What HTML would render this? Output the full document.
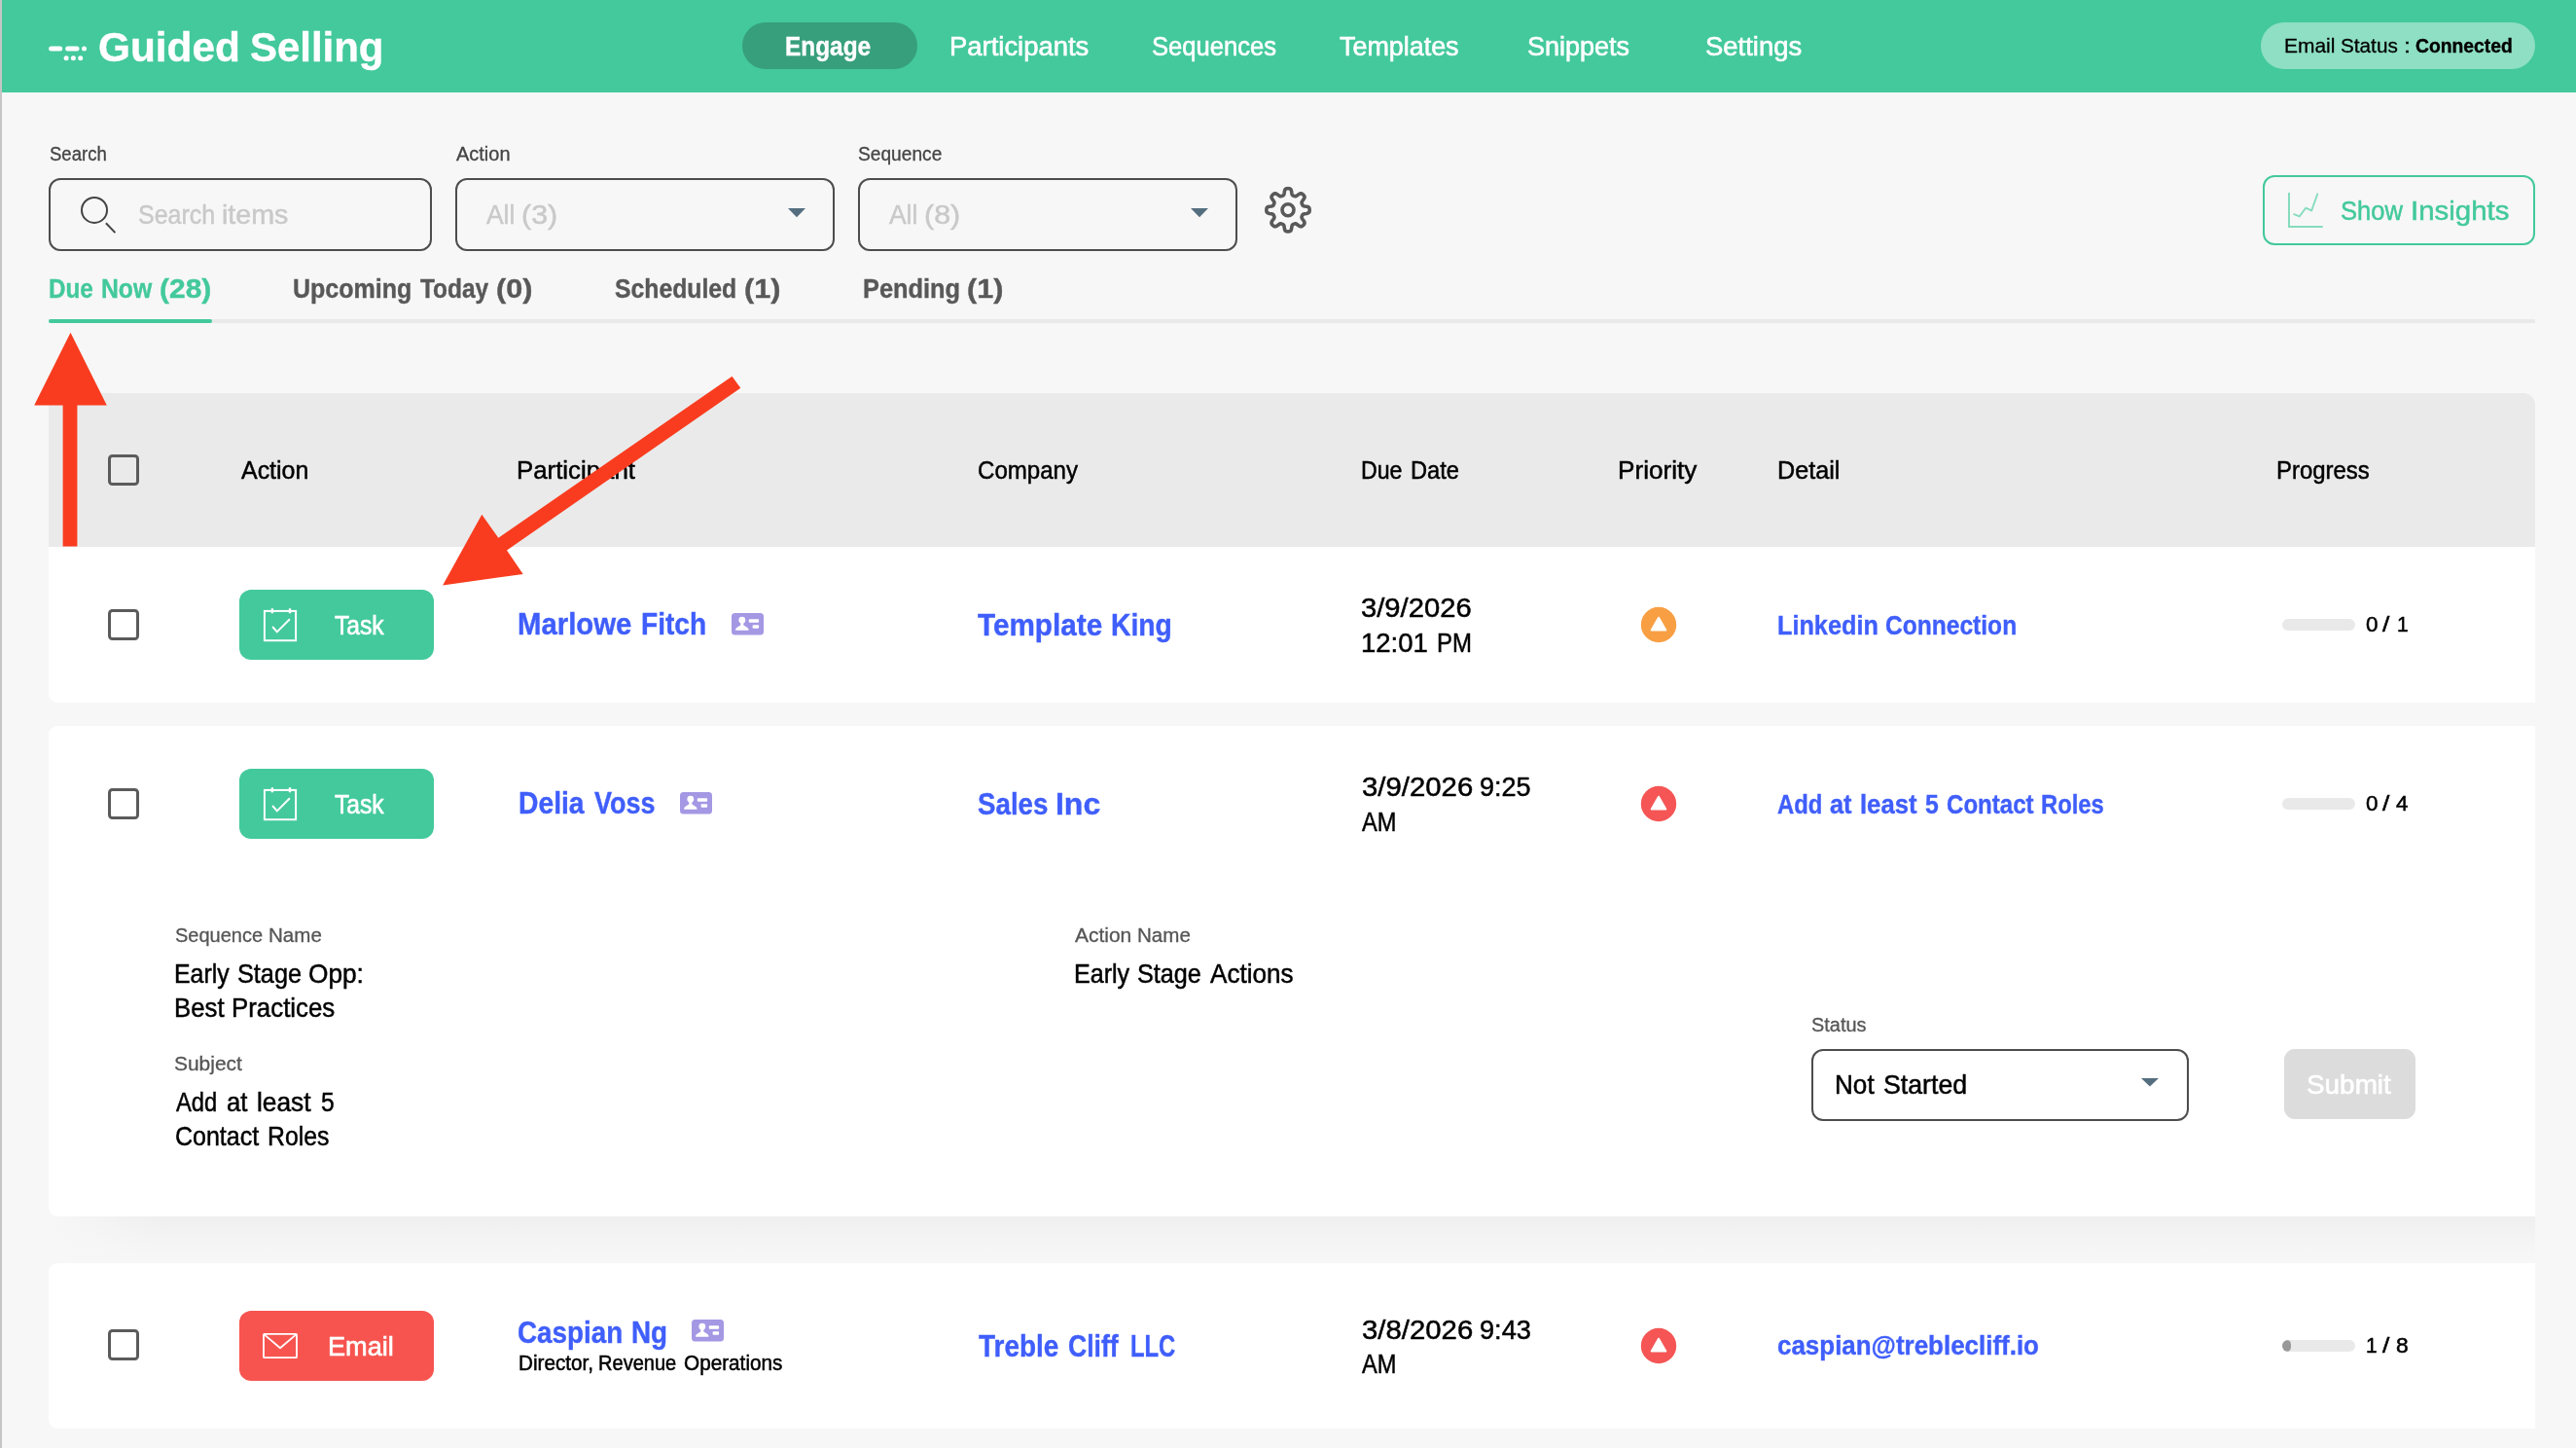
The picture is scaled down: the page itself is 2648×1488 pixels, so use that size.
<!DOCTYPE html>
<html lang="en"><head><meta charset="utf-8"><title>Guided Selling</title><style>
html,body{margin:0;padding:0}
body{width:2648px;height:1488px;position:relative;overflow:hidden;background:#f7f7f7;font-family:"Liberation Sans",sans-serif}
.a{position:absolute;display:block}
.t{position:absolute;white-space:nowrap;transform-origin:0 0;display:block;-webkit-text-stroke:0.25px currentColor}
.box{position:absolute;box-sizing:border-box;border:2px solid #4d4d4d;border-radius:12px}
.cb{position:absolute;box-sizing:border-box;width:32px;height:32px;border:3.8px solid #5b5b5b;border-radius:4.5px}
.btn{position:absolute;width:200px;height:72px;border-radius:12px}
.pb{position:absolute;width:75px;height:12px;border-radius:6px;background:#e9e9e9;overflow:hidden}
.card{position:absolute;left:50px;width:2556px;background:#fff}
</style></head><body>
<div class="a" style="left:0;top:0;width:2648px;height:94.5px;background:#43c99b"></div>
<div class="a" style="left:0;top:0;width:2px;height:1488px;background:#c6c6c6"></div>
<svg class="a" style="left:44px;top:40px" width="50" height="30" viewBox="44 40 50 30" stroke="#fff" stroke-width="5" stroke-linecap="round" fill="#fff">
<path d="M52.6 50 H61.7 M69.7 50 H79"/><circle cx="86.5" cy="50" r="2.5" stroke="none"/>
<circle cx="68.1" cy="59.8" r="2.5" stroke="none"/><circle cx="75.4" cy="59.8" r="2.5" stroke="none"/><circle cx="82.7" cy="59.8" r="2.5" stroke="none"/>
</svg>
<div class="a" style="left:763px;top:23px;width:180px;height:48px;border-radius:24px;background:#379f7b"></div>
<div class="a" style="left:2324px;top:23px;width:282px;height:48px;border-radius:24px;background:#8edfc3"></div>

<div class="box" style="left:50px;top:183px;width:394px;height:75px"></div>
<svg class="a" style="left:78px;top:198px" width="48" height="48" viewBox="78 198 48 48" fill="none" stroke="#444" stroke-width="2"><circle cx="97" cy="215.9" r="13"/><path d="M108.9 229.3 L118.4 239.1"/></svg>
<div class="box" style="left:468px;top:183px;width:390px;height:75px"></div>
<div class="box" style="left:882px;top:183px;width:390px;height:75px"></div>
<svg class="a" style="left:808px;top:212px" width="22" height="13" viewBox="0 0 22 13"><path d="M2 2 H20 L11 11.3 Z" fill="#546e7f"/></svg>
<svg class="a" style="left:1222px;top:212px" width="22" height="13" viewBox="0 0 22 13"><path d="M2 2 H20 L11 11.3 Z" fill="#546e7f"/></svg>
<svg class="a" style="left:1294px;top:186px" width="60" height="60" viewBox="1294 186 60 60" fill="none" stroke="#595959" stroke-width="3.6" stroke-linejoin="round"><path d="M1324.00,193.65 L1324.70,193.68 L1325.39,193.77 L1326.06,193.97 L1326.70,194.41 L1327.25,195.30 L1327.62,196.82 L1327.86,198.53 L1328.12,199.75 L1328.47,200.42 L1328.88,200.79 L1329.31,201.04 L1329.76,201.25 L1330.22,201.43 L1330.68,201.60 L1331.17,201.74 L1331.72,201.76 L1332.43,201.54 L1333.48,200.86 L1334.86,199.82 L1336.20,199.01 L1337.22,198.76 L1337.98,198.91 L1338.60,199.24 L1339.15,199.66 L1339.66,200.14 L1340.14,200.65 L1340.56,201.20 L1340.89,201.82 L1341.04,202.58 L1340.79,203.60 L1339.98,204.94 L1338.94,206.32 L1338.26,207.37 L1338.04,208.08 L1338.06,208.63 L1338.20,209.12 L1338.37,209.58 L1338.55,210.04 L1338.76,210.49 L1339.01,210.92 L1339.38,211.33 L1340.05,211.68 L1341.27,211.94 L1342.98,212.18 L1344.50,212.55 L1345.39,213.10 L1345.83,213.74 L1346.03,214.41 L1346.12,215.10 L1346.15,215.80 L1346.12,216.50 L1346.03,217.19 L1345.83,217.86 L1345.39,218.50 L1344.50,219.05 L1342.98,219.42 L1341.27,219.66 L1340.05,219.92 L1339.38,220.27 L1339.01,220.68 L1338.76,221.11 L1338.55,221.56 L1338.37,222.02 L1338.20,222.48 L1338.06,222.97 L1338.04,223.52 L1338.26,224.23 L1338.94,225.28 L1339.98,226.66 L1340.79,228.00 L1341.04,229.02 L1340.89,229.78 L1340.56,230.40 L1340.14,230.95 L1339.66,231.46 L1339.15,231.94 L1338.60,232.36 L1337.98,232.69 L1337.22,232.84 L1336.20,232.59 L1334.86,231.78 L1333.48,230.74 L1332.43,230.06 L1331.72,229.84 L1331.17,229.86 L1330.68,230.00 L1330.22,230.17 L1329.76,230.35 L1329.31,230.56 L1328.88,230.81 L1328.47,231.18 L1328.12,231.85 L1327.86,233.07 L1327.62,234.78 L1327.25,236.30 L1326.70,237.19 L1326.06,237.63 L1325.39,237.83 L1324.70,237.92 L1324.00,237.95 L1323.30,237.92 L1322.61,237.83 L1321.94,237.63 L1321.30,237.19 L1320.75,236.30 L1320.38,234.78 L1320.14,233.07 L1319.88,231.85 L1319.53,231.18 L1319.12,230.81 L1318.69,230.56 L1318.24,230.35 L1317.78,230.17 L1317.32,230.00 L1316.83,229.86 L1316.28,229.84 L1315.57,230.06 L1314.52,230.74 L1313.14,231.78 L1311.80,232.59 L1310.78,232.84 L1310.02,232.69 L1309.40,232.36 L1308.85,231.94 L1308.34,231.46 L1307.86,230.95 L1307.44,230.40 L1307.11,229.78 L1306.96,229.02 L1307.21,228.00 L1308.02,226.66 L1309.06,225.28 L1309.74,224.23 L1309.96,223.52 L1309.94,222.97 L1309.80,222.48 L1309.63,222.02 L1309.45,221.56 L1309.24,221.11 L1308.99,220.68 L1308.62,220.27 L1307.95,219.92 L1306.73,219.66 L1305.02,219.42 L1303.50,219.05 L1302.61,218.50 L1302.17,217.86 L1301.97,217.19 L1301.88,216.50 L1301.85,215.80 L1301.88,215.10 L1301.97,214.41 L1302.17,213.74 L1302.61,213.10 L1303.50,212.55 L1305.02,212.18 L1306.73,211.94 L1307.95,211.68 L1308.62,211.33 L1308.99,210.92 L1309.24,210.49 L1309.45,210.04 L1309.63,209.58 L1309.80,209.12 L1309.94,208.63 L1309.96,208.08 L1309.74,207.37 L1309.06,206.32 L1308.02,204.94 L1307.21,203.60 L1306.96,202.58 L1307.11,201.82 L1307.44,201.20 L1307.86,200.65 L1308.34,200.14 L1308.85,199.66 L1309.40,199.24 L1310.02,198.91 L1310.78,198.76 L1311.80,199.01 L1313.14,199.82 L1314.52,200.86 L1315.57,201.54 L1316.28,201.76 L1316.83,201.74 L1317.32,201.60 L1317.78,201.43 L1318.24,201.25 L1318.69,201.04 L1319.12,200.79 L1319.53,200.42 L1319.88,199.75 L1320.14,198.53 L1320.38,196.82 L1320.75,195.30 L1321.30,194.41 L1321.94,193.97 L1322.61,193.77 L1323.30,193.68Z"/><circle cx="1324" cy="215.8" r="6"/></svg>

<div class="a" style="left:2326px;top:180px;width:280px;height:72px;box-sizing:border-box;border:2px solid #43c99b;border-radius:12px"></div>
<svg class="a" style="left:2348px;top:194px" width="44" height="44" viewBox="2348 194 44 44" fill="none" stroke="#85dcbd" stroke-width="2"><path d="M2353 198 V232.9 H2387.8"/><path stroke-width="1.8" d="M2357.5 219.8 L2363.7 222.3 L2370.3 213.7 L2376.2 216.4 L2382.5 198.6"/></svg>

<div class="a" style="left:50px;top:328px;width:2556px;height:4px;background:#e9e9e9"></div>
<div class="a" style="left:50px;top:328px;width:168px;height:4px;background:#43c99b;border-radius:2px"></div>

<div class="a" style="left:50px;top:404px;width:2556px;height:158px;background:#eaeaea;border-radius:12px 12px 0 0"></div>
<div class="card" style="top:562px;height:160px;border-radius:0 0 0 9px"></div>
<div class="card" style="top:746px;height:503.7px;border-radius:9px 0 0 9px"></div>
<div class="a" style="left:50px;top:1249.7px;width:2556px;height:48px;background:linear-gradient(#efefef,#f2f2f2 30%,#f5f5f5 65%,#f7f7f7)"></div>
<div class="a" style="left:50px;top:1249.7px;width:110px;height:48px;background:linear-gradient(90deg,#f7f7f7,rgba(247,247,247,0))"></div>
<div class="card" style="top:1297.5px;height:170px;border-radius:9px 0 0 9px"></div>

<div class="cb" style="left:111px;top:467px"></div><div class="cb" style="left:111px;top:626px"></div><div class="cb" style="left:111px;top:810px"></div><div class="cb" style="left:111px;top:1366.4px"></div>
<div class="btn" style="left:246px;top:606px;background:#43c99b"></div>
<svg class="a" style="left:268px;top:622px" width="40" height="40" viewBox="268 622 40 40" fill="none" stroke="#fff" stroke-width="2">
<rect x="271.9" y="627.9" width="32.2" height="30.3"/>
<path d="M279.9 625.2 v5 M298 625.2 v5" stroke-width="2.4"/>
<path d="M280.1 644 L284.8 649.4 L297.9 636.3"/>
</svg><div class="btn" style="left:246px;top:790px;background:#43c99b"></div>
<svg class="a" style="left:268px;top:806px" width="40" height="40" viewBox="268 806 40 40" fill="none" stroke="#fff" stroke-width="2">
<rect x="271.9" y="811.9" width="32.2" height="30.3"/>
<path d="M279.9 809.2 v5 M298 809.2 v5" stroke-width="2.4"/>
<path d="M280.1 828 L284.8 833.4 L297.9 820.3"/>
</svg>
<div class="btn" style="left:246px;top:1347px;background:#f7544f"></div>
<svg class="a" style="left:266px;top:1365px" width="44" height="36" viewBox="266 1365 44 36" fill="none" stroke="#fff" stroke-width="1.8" stroke-linejoin="round"><rect x="271" y="1370.9" width="34" height="24.3" rx="0.8"/><path d="M271.6 1371.4 L288 1385.2 L304.4 1371.4"/></svg>
<svg class="a" style="left:750.2px;top:628px;filter:blur(0.7px)" width="37" height="26" viewBox="-2 -2 37 26">
<rect x="0" y="0" width="33" height="22.4" rx="3.5" fill="#a498e4"/>
<circle cx="10.8" cy="7.2" r="3.4" fill="#fff"/><rect x="9.3" y="9" width="3" height="4.5" fill="#fff"/>
<path d="M4.2 17.8 L4.2 16.6 Q4.4 15.4 6 14.6 L9.2 12.6 L12.4 12.6 L15.6 14.6 Q17.2 15.4 17.4 16.6 L17.4 17.8 Z" fill="#fff"/>
<rect x="17.8" y="6.3" width="10.3" height="3.4" rx="0.8" fill="#fff"/>
<rect x="21.6" y="12.3" width="6.5" height="3.4" rx="0.8" fill="#fff"/>
</svg><svg class="a" style="left:697px;top:811.8px;filter:blur(0.7px)" width="37" height="26" viewBox="-2 -2 37 26">
<rect x="0" y="0" width="33" height="22.4" rx="3.5" fill="#a498e4"/>
<circle cx="10.8" cy="7.2" r="3.4" fill="#fff"/><rect x="9.3" y="9" width="3" height="4.5" fill="#fff"/>
<path d="M4.2 17.8 L4.2 16.6 Q4.4 15.4 6 14.6 L9.2 12.6 L12.4 12.6 L15.6 14.6 Q17.2 15.4 17.4 16.6 L17.4 17.8 Z" fill="#fff"/>
<rect x="17.8" y="6.3" width="10.3" height="3.4" rx="0.8" fill="#fff"/>
<rect x="21.6" y="12.3" width="6.5" height="3.4" rx="0.8" fill="#fff"/>
</svg><svg class="a" style="left:709px;top:1354.2px;filter:blur(0.7px)" width="37" height="26" viewBox="-2 -2 37 26">
<rect x="0" y="0" width="33" height="22.4" rx="3.5" fill="#a498e4"/>
<circle cx="10.8" cy="7.2" r="3.4" fill="#fff"/><rect x="9.3" y="9" width="3" height="4.5" fill="#fff"/>
<path d="M4.2 17.8 L4.2 16.6 Q4.4 15.4 6 14.6 L9.2 12.6 L12.4 12.6 L15.6 14.6 Q17.2 15.4 17.4 16.6 L17.4 17.8 Z" fill="#fff"/>
<rect x="17.8" y="6.3" width="10.3" height="3.4" rx="0.8" fill="#fff"/>
<rect x="21.6" y="12.3" width="6.5" height="3.4" rx="0.8" fill="#fff"/>
</svg>
<svg class="a" style="left:1685px;top:621.7px;filter:blur(0.5px)" width="40" height="40" viewBox="-20 -20 40 40">
<circle cx="0" cy="0" r="18.2" fill="#f89f43"/>
<path d="M0 -7.3 L7.3 5.6 L-7.3 5.6 Z" fill="#fff" stroke="#fff" stroke-width="2" stroke-linejoin="round"/>
</svg><svg class="a" style="left:1685px;top:806px;filter:blur(0.5px)" width="40" height="40" viewBox="-20 -20 40 40">
<circle cx="0" cy="0" r="18.2" fill="#f55555"/>
<path d="M0 -7.3 L7.3 5.6 L-7.3 5.6 Z" fill="#fff" stroke="#fff" stroke-width="2" stroke-linejoin="round"/>
</svg><svg class="a" style="left:1685px;top:1363px;filter:blur(0.5px)" width="40" height="40" viewBox="-20 -20 40 40">
<circle cx="0" cy="0" r="18.2" fill="#f55555"/>
<path d="M0 -7.3 L7.3 5.6 L-7.3 5.6 Z" fill="#fff" stroke="#fff" stroke-width="2" stroke-linejoin="round"/>
</svg>
<div class="pb" style="left:2346px;top:636px"></div><div class="pb" style="left:2346px;top:820px"></div><div class="pb" style="left:2346px;top:1377px"><div style="width:9.4px;height:12px;border-radius:6px;background:#999"></div></div>

<div class="box" style="left:1862px;top:1078px;width:387.5px;height:74px;background:#fff"></div>
<svg class="a" style="left:2199.3px;top:1106px" width="22" height="13" viewBox="0 0 22 13"><path d="M2 2 H20 L11 10.4 Z" fill="#546e7f"/></svg>
<div class="a" style="left:2348px;top:1078px;width:135px;height:72px;border-radius:11px;background:#dcdcdc"></div>
<svg class="a" style="left:0;top:0;z-index:9" width="2648" height="1488" viewBox="0 0 2648 1488"><polygon fill="#f93c1f" points="72.5,341.7 109.8,416.4 79.4,416.4 79.4,561.5 64.6,561.5 64.6,416.4 35.2,416.4"/><polygon fill="#f93c1f" points="455.1,601.5 495.3,528.8 512.3,552.8 752.5,386.7 761.3,398.7 521,565.5 537.7,589.9"/></svg>

<span class="t" style="left:100.81px;top:27.0px;font-size:43px;line-height:43px;font-weight:bold;color:#fff;-webkit-text-stroke-width:0.4px;transform:scaleX(0.9850);">Guided </span>
<span class="t" style="left:256.99px;top:27.0px;font-size:43px;line-height:43px;font-weight:bold;color:#fff;-webkit-text-stroke-width:0.4px;transform:scaleX(0.9751);">Selling</span>
<span class="t" style="left:807.30px;top:35.0px;font-size:27px;line-height:27px;font-weight:bold;color:#fff;-webkit-text-stroke-width:0.4px;transform:scaleX(0.9038);">Engage</span>
<span class="t" style="left:975.58px;top:35.0px;font-size:27px;line-height:27px;color:#fff;-webkit-text-stroke-width:0.6px;transform:scaleX(1.0160);">Participants</span>
<span class="t" style="left:1184.23px;top:35.0px;font-size:27px;line-height:27px;color:#fff;-webkit-text-stroke-width:0.6px;transform:scaleX(0.9487);">Sequences</span>
<span class="t" style="left:1377.18px;top:35.0px;font-size:27px;line-height:27px;color:#fff;-webkit-text-stroke-width:0.6px;transform:scaleX(0.9957);">Templates</span>
<span class="t" style="left:1569.99px;top:35.0px;font-size:27px;line-height:27px;color:#fff;-webkit-text-stroke-width:0.6px;transform:scaleX(1.0003);">Snippets</span>
<span class="t" style="left:1753.28px;top:35.0px;font-size:27px;line-height:27px;color:#fff;-webkit-text-stroke-width:0.6px;transform:scaleX(1.0168);">Settings</span>
<span class="t" style="left:2347.87px;top:36.0px;font-size:21px;line-height:21px;color:#000;-webkit-text-stroke-width:0.3px;transform:scaleX(0.9969);">Email </span>
<span class="t" style="left:2406.19px;top:36.0px;font-size:21px;line-height:21px;color:#000;-webkit-text-stroke-width:0.3px;transform:scaleX(0.9874);">Status </span>
<span class="t" style="left:2470.57px;top:36.0px;font-size:21px;line-height:21px;color:#000;-webkit-text-stroke-width:0.3px;transform:scaleX(1.2000);">: </span>
<span class="t" style="left:2482.51px;top:36.0px;font-size:21px;line-height:21px;font-weight:bold;color:#000;-webkit-text-stroke-width:0.4px;transform:scaleX(0.9186);">Connected</span>
<span class="t" style="left:50.64px;top:148.0px;font-size:20px;line-height:20px;color:#444;-webkit-text-stroke-width:0.3px;transform:scaleX(0.9266);">Search</span>
<span class="t" style="left:469.20px;top:148.0px;font-size:20px;line-height:20px;color:#444;-webkit-text-stroke-width:0.3px;transform:scaleX(0.9984);">Action</span>
<span class="t" style="left:882.08px;top:148.0px;font-size:20px;line-height:20px;color:#444;-webkit-text-stroke-width:0.3px;transform:scaleX(0.9579);">Sequence</span>
<span class="t" style="left:142.19px;top:207.0px;font-size:28px;line-height:28px;color:#c9c9c9;-webkit-text-stroke-width:0.5px;transform:scaleX(0.8914);">Search </span>
<span class="t" style="left:228.00px;top:207.0px;font-size:28px;line-height:28px;color:#c9c9c9;-webkit-text-stroke-width:0.5px;transform:scaleX(1.0230);">items</span>
<span class="t" style="left:499.57px;top:207.0px;font-size:28px;line-height:28px;color:#c9c9c9;-webkit-text-stroke-width:0.5px;transform:scaleX(0.9431);">All </span>
<span class="t" style="left:535.98px;top:207.0px;font-size:28px;line-height:28px;color:#c9c9c9;-webkit-text-stroke-width:0.5px;transform:scaleX(1.0859);">(3)</span>
<span class="t" style="left:913.57px;top:207.0px;font-size:28px;line-height:28px;color:#c9c9c9;-webkit-text-stroke-width:0.5px;transform:scaleX(0.9431);">All </span>
<span class="t" style="left:949.98px;top:207.0px;font-size:28px;line-height:28px;color:#c9c9c9;-webkit-text-stroke-width:0.5px;transform:scaleX(1.0859);">(8)</span>
<span class="t" style="left:2406.14px;top:203.0px;font-size:28px;line-height:28px;color:#43c99b;-webkit-text-stroke-width:0.5px;transform:scaleX(0.9121);">Show </span>
<span class="t" style="left:2478.08px;top:203.0px;font-size:28px;line-height:28px;color:#43c99b;-webkit-text-stroke-width:0.5px;transform:scaleX(1.0505);">Insights</span>
<span class="t" style="left:50.34px;top:283.0px;font-size:28px;line-height:28px;font-weight:bold;color:#43c99b;-webkit-text-stroke-width:0.4px;transform:scaleX(0.8667);">Due </span>
<span class="t" style="left:103.74px;top:283.0px;font-size:28px;line-height:28px;font-weight:bold;color:#43c99b;-webkit-text-stroke-width:0.4px;transform:scaleX(0.8825);">Now </span>
<span class="t" style="left:164.02px;top:283.0px;font-size:28px;line-height:28px;font-weight:bold;color:#43c99b;-webkit-text-stroke-width:0.4px;transform:scaleX(1.0695);">(28)</span>
<span class="t" style="left:301.24px;top:283.0px;font-size:28px;line-height:28px;font-weight:bold;color:#585858;-webkit-text-stroke-width:0.4px;transform:scaleX(0.8935);">Upcoming </span>
<span class="t" style="left:431.72px;top:283.0px;font-size:28px;line-height:28px;font-weight:bold;color:#585858;-webkit-text-stroke-width:0.4px;transform:scaleX(0.8729);">Today </span>
<span class="t" style="left:510.41px;top:283.0px;font-size:28px;line-height:28px;font-weight:bold;color:#585858;-webkit-text-stroke-width:0.4px;transform:scaleX(1.0913);">(0)</span>
<span class="t" style="left:632.30px;top:283.0px;font-size:28px;line-height:28px;font-weight:bold;color:#585858;-webkit-text-stroke-width:0.4px;transform:scaleX(0.8843);">Scheduled </span>
<span class="t" style="left:765.41px;top:283.0px;font-size:28px;line-height:28px;font-weight:bold;color:#585858;-webkit-text-stroke-width:0.4px;transform:scaleX(1.0913);">(1)</span>
<span class="t" style="left:887.08px;top:283.0px;font-size:28px;line-height:28px;font-weight:bold;color:#585858;-webkit-text-stroke-width:0.4px;transform:scaleX(0.9053);">Pending </span>
<span class="t" style="left:994.41px;top:283.0px;font-size:28px;line-height:28px;font-weight:bold;color:#585858;-webkit-text-stroke-width:0.4px;transform:scaleX(1.0902);">(1)</span>
<span class="t" style="left:247.60px;top:470.0px;font-size:26px;line-height:26px;color:#000;-webkit-text-stroke-width:0.5px;transform:scaleX(0.9591);">Action</span>
<span class="t" style="left:531.37px;top:470.0px;font-size:26px;line-height:26px;color:#000;-webkit-text-stroke-width:0.5px;transform:scaleX(0.9930);">Participant</span>
<span class="t" style="left:1004.79px;top:470.0px;font-size:26px;line-height:26px;color:#000;-webkit-text-stroke-width:0.5px;transform:scaleX(0.9255);">Company</span>
<span class="t" style="left:1663.25px;top:470.0px;font-size:26px;line-height:26px;color:#000;-webkit-text-stroke-width:0.5px;transform:scaleX(1.0063);">Priority</span>
<span class="t" style="left:1827.04px;top:470.0px;font-size:26px;line-height:26px;color:#000;-webkit-text-stroke-width:0.5px;transform:scaleX(0.9690);">Detail</span>
<span class="t" style="left:2340.35px;top:470.0px;font-size:26px;line-height:26px;color:#000;-webkit-text-stroke-width:0.5px;transform:scaleX(0.9206);">Progress</span>
<span class="t" style="left:1398.66px;top:470.0px;font-size:26px;line-height:26px;color:#000;-webkit-text-stroke-width:0.5px;transform:scaleX(0.8908);">Due </span>
<span class="t" style="left:1450.00px;top:470.0px;font-size:26px;line-height:26px;color:#000;-webkit-text-stroke-width:0.5px;transform:scaleX(0.9092);">Date</span>
<span class="t" style="left:344.27px;top:630.0px;font-size:27px;line-height:27px;color:#fff;-webkit-text-stroke-width:0.6px;transform:scaleX(0.9127);">Task</span>
<span class="t" style="left:532.26px;top:626.0px;font-size:31px;line-height:31px;font-weight:bold;color:#3f5efb;-webkit-text-stroke-width:0.4px;transform:scaleX(0.9462);">Marlowe </span>
<span class="t" style="left:658.58px;top:626.0px;font-size:31px;line-height:31px;font-weight:bold;color:#3f5efb;-webkit-text-stroke-width:0.4px;transform:scaleX(0.9051);">Fitch</span>
<span class="t" style="left:1004.60px;top:627.0px;font-size:31px;line-height:31px;font-weight:bold;color:#3f5efb;-webkit-text-stroke-width:0.4px;transform:scaleX(0.9581);">Template </span>
<span class="t" style="left:1142.47px;top:627.0px;font-size:31px;line-height:31px;font-weight:bold;color:#3f5efb;-webkit-text-stroke-width:0.4px;transform:scaleX(0.9129);">King</span>
<span class="t" style="left:1399.19px;top:611.0px;font-size:28px;line-height:28px;color:#000;-webkit-text-stroke-width:0.5px;transform:scaleX(1.0424);">3/9/2026</span>
<span class="t" style="left:1398.90px;top:647.0px;font-size:28px;line-height:28px;color:#000;-webkit-text-stroke-width:0.5px;transform:scaleX(0.9828);">12:01 </span>
<span class="t" style="left:1476.58px;top:647.0px;font-size:28px;line-height:28px;color:#000;-webkit-text-stroke-width:0.5px;transform:scaleX(0.8552);">PM</span>
<span class="t" style="left:1827.14px;top:628.0px;font-size:28.5px;line-height:28.5px;font-weight:bold;color:#3f5efb;-webkit-text-stroke-width:0.4px;transform:scaleX(0.8862);">Linkedin </span>
<span class="t" style="left:1937.97px;top:628.0px;font-size:28.5px;line-height:28.5px;font-weight:bold;color:#3f5efb;-webkit-text-stroke-width:0.4px;transform:scaleX(0.8622);">Connection</span>
<span class="t" style="left:2431.59px;top:631.0px;font-size:22px;line-height:22px;color:#000;-webkit-text-stroke-width:0.5px;transform:scaleX(1.0218);">0 </span>
<span class="t" style="left:2448.96px;top:631.0px;font-size:22px;line-height:22px;color:#000;-webkit-text-stroke-width:0.5px;transform:scaleX(1.2000);">/ </span>
<span class="t" style="left:2464.21px;top:631.0px;font-size:22px;line-height:22px;color:#000;-webkit-text-stroke-width:0.5px;transform:scaleX(0.9501);">1</span>
<span class="t" style="left:344.27px;top:814.0px;font-size:27px;line-height:27px;color:#fff;-webkit-text-stroke-width:0.6px;transform:scaleX(0.9127);">Task</span>
<span class="t" style="left:532.56px;top:810.0px;font-size:31px;line-height:31px;font-weight:bold;color:#3f5efb;-webkit-text-stroke-width:0.4px;transform:scaleX(0.9123);">Delia </span>
<span class="t" style="left:610.53px;top:810.0px;font-size:31px;line-height:31px;font-weight:bold;color:#3f5efb;-webkit-text-stroke-width:0.4px;transform:scaleX(0.8694);">Voss</span>
<span class="t" style="left:1004.84px;top:811.0px;font-size:31px;line-height:31px;font-weight:bold;color:#3f5efb;-webkit-text-stroke-width:0.4px;transform:scaleX(0.8936);">Sales </span>
<span class="t" style="left:1084.64px;top:811.0px;font-size:31px;line-height:31px;font-weight:bold;color:#3f5efb;-webkit-text-stroke-width:0.4px;transform:scaleX(1.0304);">Inc</span>
<span class="t" style="left:1399.69px;top:795.0px;font-size:28px;line-height:28px;color:#000;-webkit-text-stroke-width:0.5px;transform:scaleX(1.0478);">3/9/2026 </span>
<span class="t" style="left:1521.18px;top:795.0px;font-size:28px;line-height:28px;color:#000;-webkit-text-stroke-width:0.5px;transform:scaleX(0.9645);">9:25</span>
<span class="t" style="left:1400.06px;top:831.0px;font-size:28px;line-height:28px;color:#000;-webkit-text-stroke-width:0.5px;transform:scaleX(0.8441);">AM</span>
<span class="t" style="left:1826.84px;top:812.0px;font-size:28.5px;line-height:28.5px;font-weight:bold;color:#3f5efb;-webkit-text-stroke-width:0.4px;transform:scaleX(0.8364);">Add </span>
<span class="t" style="left:1881.17px;top:812.0px;font-size:28.5px;line-height:28.5px;font-weight:bold;color:#3f5efb;-webkit-text-stroke-width:0.4px;transform:scaleX(0.8906);">at </span>
<span class="t" style="left:1911.83px;top:812.0px;font-size:28.5px;line-height:28.5px;font-weight:bold;color:#3f5efb;-webkit-text-stroke-width:0.4px;transform:scaleX(0.8995);">least </span>
<span class="t" style="left:1978.97px;top:812.0px;font-size:28.5px;line-height:28.5px;font-weight:bold;color:#3f5efb;-webkit-text-stroke-width:0.4px;transform:scaleX(0.8682);">5 </span>
<span class="t" style="left:2001.01px;top:812.0px;font-size:28.5px;line-height:28.5px;font-weight:bold;color:#3f5efb;-webkit-text-stroke-width:0.4px;transform:scaleX(0.8446);">Contact </span>
<span class="t" style="left:2097.97px;top:812.0px;font-size:28.5px;line-height:28.5px;font-weight:bold;color:#3f5efb;-webkit-text-stroke-width:0.4px;transform:scaleX(0.8352);">Roles</span>
<span class="t" style="left:2431.59px;top:815.0px;font-size:22px;line-height:22px;color:#000;-webkit-text-stroke-width:0.5px;transform:scaleX(1.0218);">0 </span>
<span class="t" style="left:2448.96px;top:815.0px;font-size:22px;line-height:22px;color:#000;-webkit-text-stroke-width:0.5px;transform:scaleX(1.2000);">/ </span>
<span class="t" style="left:2462.76px;top:815.0px;font-size:22px;line-height:22px;color:#000;-webkit-text-stroke-width:0.5px;transform:scaleX(1.0140);">4</span>
<span class="t" style="left:179.53px;top:951.0px;font-size:20.5px;line-height:20.5px;color:#555;-webkit-text-stroke-width:0.3px;transform:scaleX(0.9752);">Sequence </span>
<span class="t" style="left:275.97px;top:951.0px;font-size:20.5px;line-height:20.5px;color:#555;-webkit-text-stroke-width:0.3px;transform:scaleX(1.0028);">Name</span>
<span class="t" style="left:179.19px;top:987.0px;font-size:28px;line-height:28px;color:#000;-webkit-text-stroke-width:0.5px;transform:scaleX(0.8885);">Early </span>
<span class="t" style="left:244.15px;top:987.0px;font-size:28px;line-height:28px;color:#000;-webkit-text-stroke-width:0.5px;transform:scaleX(0.9023);">Stage </span>
<span class="t" style="left:316.80px;top:987.0px;font-size:28px;line-height:28px;color:#000;-webkit-text-stroke-width:0.5px;transform:scaleX(0.9373);">Opp:</span>
<span class="t" style="left:178.94px;top:1022.0px;font-size:28px;line-height:28px;color:#000;-webkit-text-stroke-width:0.5px;transform:scaleX(0.9199);">Best </span>
<span class="t" style="left:238.43px;top:1022.0px;font-size:28px;line-height:28px;color:#000;-webkit-text-stroke-width:0.5px;transform:scaleX(0.9228);">Practices</span>
<span class="t" style="left:179.19px;top:1083.0px;font-size:20.5px;line-height:20.5px;color:#555;-webkit-text-stroke-width:0.3px;transform:scaleX(1.0206);">Subject</span>
<span class="t" style="left:181.06px;top:1119.0px;font-size:28px;line-height:28px;color:#000;-webkit-text-stroke-width:0.5px;transform:scaleX(0.8463);">Add </span>
<span class="t" style="left:232.85px;top:1119.0px;font-size:28px;line-height:28px;color:#000;-webkit-text-stroke-width:0.5px;transform:scaleX(0.9162);">at </span>
<span class="t" style="left:263.97px;top:1119.0px;font-size:28px;line-height:28px;color:#000;-webkit-text-stroke-width:0.5px;transform:scaleX(0.9392);">least </span>
<span class="t" style="left:329.61px;top:1119.0px;font-size:28px;line-height:28px;color:#000;-webkit-text-stroke-width:0.5px;transform:scaleX(0.8761);">5</span>
<span class="t" style="left:179.75px;top:1154.0px;font-size:28px;line-height:28px;color:#000;-webkit-text-stroke-width:0.5px;transform:scaleX(0.8931);">Contact </span>
<span class="t" style="left:275.24px;top:1154.0px;font-size:28px;line-height:28px;color:#000;-webkit-text-stroke-width:0.5px;transform:scaleX(0.8855);">Roles</span>
<span class="t" style="left:1104.70px;top:951.0px;font-size:20.5px;line-height:20.5px;color:#555;-webkit-text-stroke-width:0.3px;transform:scaleX(1.0219);">Action </span>
<span class="t" style="left:1169.47px;top:951.0px;font-size:20.5px;line-height:20.5px;color:#555;-webkit-text-stroke-width:0.3px;transform:scaleX(1.0028);">Name</span>
<span class="t" style="left:1103.66px;top:987.0px;font-size:28px;line-height:28px;color:#000;-webkit-text-stroke-width:0.5px;transform:scaleX(0.8952);">Early </span>
<span class="t" style="left:1169.16px;top:987.0px;font-size:28px;line-height:28px;color:#000;-webkit-text-stroke-width:0.5px;transform:scaleX(0.8986);">Stage </span>
<span class="t" style="left:1244.05px;top:987.0px;font-size:28px;line-height:28px;color:#000;-webkit-text-stroke-width:0.5px;transform:scaleX(0.9327);">Actions</span>
<span class="t" style="left:1862.04px;top:1043.0px;font-size:20.5px;line-height:20.5px;color:#555;-webkit-text-stroke-width:0.3px;transform:scaleX(0.9710);">Status</span>
<span class="t" style="left:1886.39px;top:1101.0px;font-size:28px;line-height:28px;color:#000;-webkit-text-stroke-width:0.5px;transform:scaleX(0.9327);">Not </span>
<span class="t" style="left:1935.76px;top:1101.0px;font-size:28px;line-height:28px;color:#000;-webkit-text-stroke-width:0.5px;transform:scaleX(0.9537);">Started</span>
<span class="t" style="left:2371.24px;top:1101.0px;font-size:28px;line-height:28px;color:#fff;-webkit-text-stroke-width:0.6px;transform:scaleX(0.9962);">Submit</span>
<span class="t" style="left:336.69px;top:1371.0px;font-size:27px;line-height:27px;color:#fff;-webkit-text-stroke-width:0.6px;transform:scaleX(1.0058);">Email</span>
<span class="t" style="left:532.16px;top:1354.0px;font-size:31px;line-height:31px;font-weight:bold;color:#3f5efb;-webkit-text-stroke-width:0.4px;transform:scaleX(0.8966);">Caspian </span>
<span class="t" style="left:648.57px;top:1354.0px;font-size:31px;line-height:31px;font-weight:bold;color:#3f5efb;-webkit-text-stroke-width:0.4px;transform:scaleX(0.8979);">Ng</span>
<span class="t" style="left:532.72px;top:1390.0px;font-size:22px;line-height:22px;color:#000;-webkit-text-stroke-width:0.5px;transform:scaleX(0.9416);">Director, </span>
<span class="t" style="left:615.44px;top:1390.0px;font-size:22px;line-height:22px;color:#000;-webkit-text-stroke-width:0.5px;transform:scaleX(0.9113);">Revenue </span>
<span class="t" style="left:702.61px;top:1390.0px;font-size:22px;line-height:22px;color:#000;-webkit-text-stroke-width:0.5px;transform:scaleX(0.9424);">Operations</span>
<span class="t" style="left:1006.14px;top:1368.0px;font-size:31px;line-height:31px;font-weight:bold;color:#3f5efb;-webkit-text-stroke-width:0.4px;transform:scaleX(0.9014);">Treble </span>
<span class="t" style="left:1098.31px;top:1368.0px;font-size:31px;line-height:31px;font-weight:bold;color:#3f5efb;-webkit-text-stroke-width:0.4px;transform:scaleX(0.8553);">Cliff </span>
<span class="t" style="left:1161.68px;top:1368.0px;font-size:31px;line-height:31px;font-weight:bold;color:#3f5efb;-webkit-text-stroke-width:0.4px;transform:scaleX(0.7682);">LLC</span>
<span class="t" style="left:1399.69px;top:1353.0px;font-size:28px;line-height:28px;color:#000;-webkit-text-stroke-width:0.5px;transform:scaleX(1.0478);">3/8/2026 </span>
<span class="t" style="left:1521.18px;top:1353.0px;font-size:28px;line-height:28px;color:#000;-webkit-text-stroke-width:0.5px;transform:scaleX(0.9712);">9:43</span>
<span class="t" style="left:1400.06px;top:1388.0px;font-size:28px;line-height:28px;color:#000;-webkit-text-stroke-width:0.5px;transform:scaleX(0.8441);">AM</span>
<span class="t" style="left:1826.94px;top:1368.0px;font-size:28.5px;line-height:28.5px;font-weight:bold;color:#3f5efb;-webkit-text-stroke-width:0.4px;transform:scaleX(0.9103);">caspian@treblecliff.io</span>
<span class="t" style="left:2432.21px;top:1372.0px;font-size:22px;line-height:22px;color:#000;-webkit-text-stroke-width:0.5px;transform:scaleX(0.9501);">1 </span>
<span class="t" style="left:2448.96px;top:1372.0px;font-size:22px;line-height:22px;color:#000;-webkit-text-stroke-width:0.5px;transform:scaleX(1.2000);">/ </span>
<span class="t" style="left:2463.16px;top:1372.0px;font-size:22px;line-height:22px;color:#000;-webkit-text-stroke-width:0.5px;transform:scaleX(1.0348);">8</span>
</body></html>
